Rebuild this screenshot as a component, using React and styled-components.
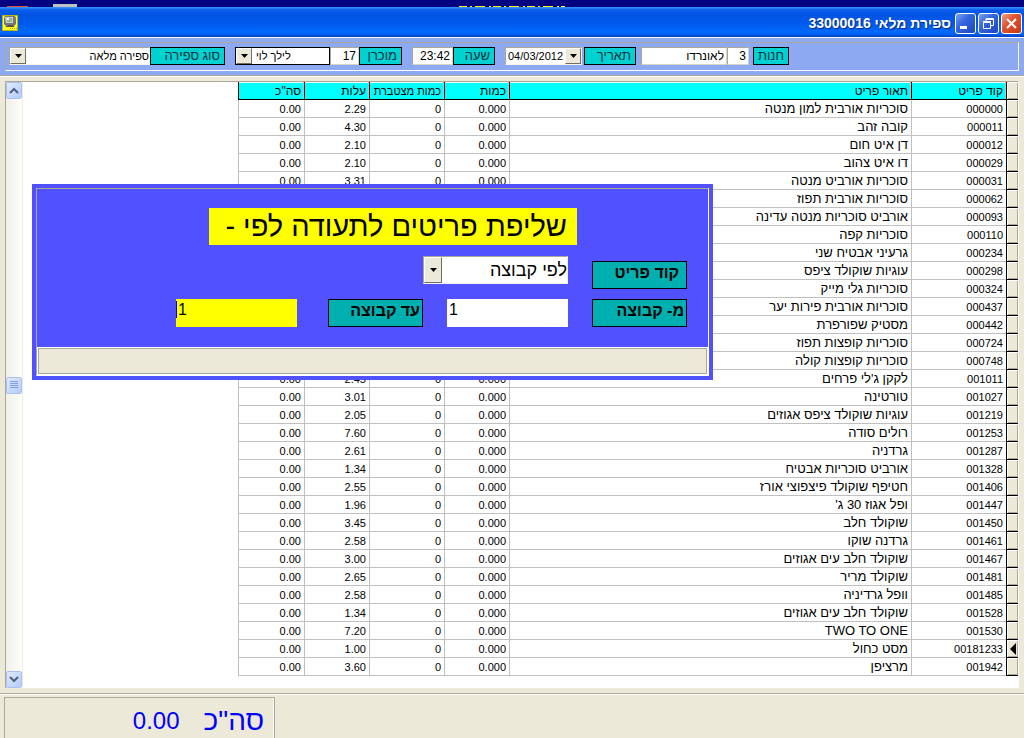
import React from 'react';
import styled, { createGlobalStyle, css } from 'styled-components';

const GlobalStyle = createGlobalStyle`
  * {
    box-sizing: border-box;
  }
  body {
    margin: 0;
    background-color: #ece9d8;
    font-family: "Liberation Sans", "DejaVu Sans", sans-serif;
    font-size: 12px;
    color: black;
  }
  input, select, button {
    font-family: inherit;
    border-radius: 0;
    margin: 0;
  }
`

const Window = styled.div`
  position: relative;
  display: flex;
  flex-direction: column;
  min-height: 100vh;
`

const Desktop = styled.div`
  display: flex;
  height: 7px;
  background-color: #000080;
  svg {
    width: 100%;
    height: 7px;
  }
`

const TitleBar = styled.header`
  display: flex;
  align-items: center;
  gap: 2px;
  height: 30px;
  padding: 2px 2px 0;
  background: linear-gradient(#3f94ff 0, #0a5de8 3px, #0054e3 8px, #0059ec 16px, #0069fd 24px, #0063f5 27px, #003cbb 30px);
`

const Title = styled.h1`
  flex: 1;
  margin: 0 2px 0 0;
  color: white;
  font-size: 14px;
  line-height: 20px;
  text-shadow: 1px 1px 1px #0a2a80;
`

const WindowButton = styled.button`
  width: 21px;
  height: 21px;
  padding: 0;
  border: 1px solid white;
  border-radius: 3px;
  background: ${props => props.$close
    ? 'linear-gradient(135deg, #f0a088, #e0532f 40%, #c63a14)'
    : 'linear-gradient(135deg, #7ba2f3, #3566de 40%, #1c46c0)'};
  svg {
    display: block;
  }
`

const Toolbar = styled.div`
  padding: 4px 5px;
  border-top: 1px solid white;
  border-bottom: 1px solid #aca899;
  background-color: #8ca9f2;
`

const ToolbarPanel = styled.div`
  display: flex;
  align-items: flex-start;
  gap: 10px;
  height: 29px;
  padding: 4px 229px 0 4px;
  border: 1px solid white;
  border-top-color: #aca899;
  border-left-color: #aca899;
`

const Group = styled.div`
  display: flex;
  flex: none;
  gap: ${props => props.$gap || 0}px;
`

const Tag = styled.label`
  width: ${props => props.$width}px;
  height: 18px;
  padding-right: 4px;
  border: 1px solid black;
  background-color: #00d2d2;
  color: #003040;
  font-size: 13px;
  line-height: 16px;
  white-space: nowrap;
`

const Field = styled.input`
  width: ${props => props.$width}px;
  height: 18px;
  padding: 0 2px;
  border: 1px solid #d8d4c4;
  border-top-color: #aca899;
  border-left-color: #aca899;
  background-color: white;
  font-size: 12px;
  text-align: right;
`

const Combo = styled.div`
  position: relative;
  width: ${props => props.$width}px;
  height: ${props => props.$large ? 28 : 18}px;
  select {
    display: block;
    width: 100%;
    height: 100%;
    padding: 0 0 0 20px;
    appearance: none;
    border: 1px solid ${props => props.$black ? 'black' : '#f4f2ea'};
    ${props => !props.$black && css`
      border-top-color: #aca899;
      border-left-color: #aca899;
    `}
    background-color: white;
    color: black;
    font-size: ${props => props.$large ? 18 : 11}px;
  }
`

const DateCombo = styled(Combo)`
  select {
    padding: 0 2px;
  }
`

const Arrow = styled.span`
  position: absolute;
  top: 1px;
  bottom: 1px;
  ${props => props.$end ? 'right: 1px;' : 'left: 1px;'}
  display: flex;
  align-items: center;
  justify-content: center;
  width: ${props => props.$large ? 18 : 16}px;
  border: 1px solid white;
  border-right-color: #716f64;
  border-bottom-color: #716f64;
  background-color: #ece9d8;
  pointer-events: none;
`

const Main = styled.main`
  padding: 4px 5px 5px;
  border-top: 1px solid white;
  border-bottom: 1px solid #aca899;
`

const Grid = styled.div`
  display: flex;
  border: 1px solid #aca899;
  border-bottom: 0;
  border-right-color: white;
  background-color: white;
`

const Table = styled.table`
  flex: 1;
  width: 0;
  margin: 0 0 12px 215px;
  border-collapse: separate;
  border-spacing: 0;
  table-layout: fixed;
`

const HeadCell = styled.th`
  width: ${props => props.$width ? props.$width + 'px' : 'auto'};
  height: 18px;
  padding: 0 3px;
  border-left: 1px solid black;
  border-bottom: 1px solid black;
  background-color: cyan;
  box-shadow: inset -1px 0 #c0c0c0, inset 0 1px #e8ffff;
  font-weight: normal;
  font-size: ${props => props.$small ? 11 : 12}px;
  line-height: 16px;
  text-align: right;
  white-space: nowrap;
`

const Cell = styled.td`
  height: 18px;
  padding: 0 3px;
  border-left: 1px solid #c0c0c0;
  border-bottom: 1px solid #c0c0c0;
  font-size: ${props => props.$text ? 13 : 11}px;
  line-height: 16px;
  text-align: right;
  white-space: nowrap;
`

const Marker = styled.td`
  width: 12px;
  height: 18px;
  padding: 0;
  border-left: 1px solid black;
  border-bottom: 1px solid black;
  background-color: #ece9d8;
  box-shadow: inset 1px 1px white, inset -1px -1px #aca899;
  svg {
    display: block;
    margin: auto;
  }
`

const ScrollBar = styled.div`
  display: flex;
  flex-direction: column;
  justify-content: space-between;
  width: 17px;
  border-right: 1px solid #eeede5;
  background: linear-gradient(90deg, #f0efe9, #fefefb);
`

const ScrollButton = styled.button`
  display: flex;
  align-items: center;
  justify-content: center;
  width: 16px;
  height: 17px;
  padding: 0;
  border: 1px solid #a8c0f4;
  border-radius: 2px;
  background: linear-gradient(135deg, #e0eaff, #b4cbfa);
`

const Footer = styled.footer`
  display: flex;
  flex: 1;
  justify-content: flex-end;
  padding: 2px 4px 0;
  border-top: 1px solid white;
`

const Total = styled.div`
  display: flex;
  align-items: center;
  gap: 24px;
  width: 271px;
  height: 42px;
  padding: 4px 10px 0;
  border: 1px solid #aca899;
  border-bottom: 0;
  box-shadow: inset -1px 0 white;
  color: blue;
  font-size: 24px;
  line-height: 32px;
`

const TotalName = styled.span`
  font-size: 28px;
`

const Dialog = styled.section`
  position: absolute;
  top: 184px;
  left: 32px;
  width: 681px;
  padding: 4px;
  background-color: #5151ff;
`

const DialogFrame = styled.form`
  display: flex;
  flex-direction: column;
  align-items: flex-start;
  border: 1px solid white;
  border-top-color: #aca899;
  border-left-color: #aca899;
`

const DialogTitle = styled.h2`
  width: 368px;
  height: 37px;
  margin: 19px 131px 11px 0;
  padding: 0 10px;
  background-color: yellow;
  font-size: 29px;
  font-weight: normal;
  line-height: 36px;
  white-space: nowrap;
`

const Criteria = styled.div`
  display: grid;
  grid-template-columns: 95px 121px 95px 128px;
  grid-template-rows: 33px 28px;
  column-gap: 24px;
  row-gap: 10px;
  align-items: end;
  padding: 0 21px 20px;
  ${Combo} {
    grid-column: 2 / 5;
    align-self: start;
  }
`

const Caption = styled.label`
  height: 28px;
  padding-right: ${props => props.$inset ? 7 : 2}px;
  border: 1px solid black;
  background-color: #00b0b0;
  font-size: 16px;
  font-weight: bold;
  line-height: 22px;
  white-space: nowrap;
`

const RangeBox = styled.div`
  position: relative;
  justify-self: end;
  width: 121px;
  input {
    display: block;
    width: 100%;
    height: 28px;
    padding: 0 2px 6px;
    border: 0;
    background-color: ${props => props.$active ? 'yellow' : 'white'};
    font-size: 16px;
    text-align: left;
  }
`

const Caret = styled.span`
  position: absolute;
  top: 2px;
  left: 0;
  width: 1px;
  height: 17px;
  background-color: blue;
`

const Status = styled.div`
  align-self: stretch;
  height: 28px;
  border: 1px solid white;
  background-color: #ece9d8;
  box-shadow: inset 1px 1px #aca899, inset -1px -1px #aca899;
`

const row = (code, name, cost) => ({ code, name, qty: '0.000', sum: '0', cost, total: '0.00' })

const items = [
  row('000000', 'סוכריות אורבית למון מנטה', '2.29'),
  row('000011', 'קובה זהב', '4.30'),
  row('000012', 'דן איט חום', '2.10'),
  row('000029', 'דו איט צהוב', '2.10'),
  row('000031', 'סוכריות אורביט מנטה', '3.31'),
  { code: '000062', name: 'סוכריות אורבית תפוז' },
  { code: '000093', name: 'אורביט סוכריות מנטה עדינה' },
  { code: '000110', name: 'סוכריות קפה' },
  { code: '000234', name: 'גרעיני אבטיח שני' },
  { code: '000298', name: 'עוגיות שוקולד ציפס' },
  { code: '000324', name: 'סוכריות גלי מייק' },
  { code: '000437', name: 'סוכריות אורבית פירות יער' },
  { code: '000442', name: 'מסטיק שפורפרת' },
  { code: '000724', name: 'סוכריות קופצות תפוז' },
  { code: '000748', name: 'סוכריות קופצות קולה' },
  row('001011', "לקקן ג'לי פרחים", '2.45'),
  row('001027', 'טורטינה', '3.01'),
  row('001219', 'עוגיות שוקולד ציפס אגוזים', '2.05'),
  row('001253', 'רולים סודה', '7.60'),
  row('001287', 'גרדניה', '2.61'),
  row('001328', 'אורביט סוכריות אבטיח', '1.34'),
  row('001406', 'חטיפף שוקולד פיצפוצי אורז', '2.55'),
  row('001447', "ופל אגוז 30 ג'", '1.96'),
  row('001450', 'שוקולד חלב', '3.45'),
  row('001461', 'גרדנה שוקו', '2.58'),
  row('001467', 'שוקולד חלב עים אגוזים', '3.00'),
  row('001481', 'שוקולד מריר', '2.65'),
  row('001485', 'וופל גרדיניה', '2.58'),
  row('001528', 'שוקולד חלב עים אגוזים', '1.34'),
  row('001530', 'TWO TO ONE', '7.20'),
  row('00181233', 'מסט כחול', '1.00'),
  row('001942', 'מרציפן', '3.60'),
]

const Triangle = () => (
  <svg width="7" height="4" viewBox="0 0 7 4"><path d="M0 0h7L3.5 4z" /></svg>
)

const Chevron = ({ up }) => (
  <svg width="10" height="7" viewBox="0 0 10 7" fill="none" stroke="#4d6185" strokeWidth="2">
    <path d={up ? 'M1 6l4-4 4 4' : 'M1 1l4 4 4-4'} />
  </svg>
)

const ComputerIcon = () => (
  <svg width="16" height="16" viewBox="0 0 16 16">
    <path fill="#ffff20" stroke="#c8b400" d="M.5.5h15v15H.5z" />
    <path fill="#777" d="M3 1h10l1 2v6l-2 2H4L2 9V3z" />
    <path fill="#c8d0d0" d="M3 2h8v6H4z" />
    <path fill="#90b890" d="M5 3h5v4H5z" />
    <path fill="#f4f4f4" d="M5 3h2v2H5z" />
    <path fill="#555" d="M6 10h5v2H6zM4 11h8v1H4z" />
    <path stroke="#a89820" strokeDasharray="1 1" d="M8 13.5h7" />
  </svg>
)

const App = () => {
  return (
    <Window dir="rtl">
      <GlobalStyle />
      <Desktop>
        <svg viewBox="0 0 1024 7" preserveAspectRatio="none">
          <path fill="#d8502c" d="M7 6h21v1H7z" />
          <path fill="#c0c0c0" d="M53 4h24v3H53z" />
          <path stroke="yellow" strokeDasharray="8 3 2 3 10 4 2 2" d="M459 6.5h106" />
        </svg>
      </Desktop>
      <TitleBar>
        <WindowButton $close aria-label="סגור">
          <svg width="19" height="19" stroke="white" strokeWidth="2"><path d="M5 5l9 9M14 5l-9 9" /></svg>
        </WindowButton>
        <WindowButton aria-label="שחזר">
          <svg width="19" height="19" fill="none" stroke="white"><path d="M7 7V4.5h7.500v7H12M7 5.500h7M4.500 8.500h7v6h-7zM4 7.500h8" /></svg>
        </WindowButton>
        <WindowButton aria-label="מזער">
          <svg width="19" height="19" fill="white"><path d="M4 12h7v3H4z" /></svg>
        </WindowButton>
        <Title>ספירת מלאי 33000016</Title>
        <ComputerIcon />
      </TitleBar>

      <Toolbar>
        <ToolbarPanel>
          <Group $gap={5}>
            <Group $gap={4}>
              <Tag $width={36} htmlFor="store">חנות</Tag>
              <Group>
                <Field $width={22} id="store" defaultValue="3" />
                <Field $width={86} aria-label="שם חנות" defaultValue="לאונרדו" />
              </Group>
            </Group>
            <Group $gap={2}>
              <Tag $width={52} htmlFor="date">תאריך</Tag>
              <DateCombo $width={77}>
                <select id="date" dir="ltr"><option>04/03/2012</option></select>
                <Arrow $end><Triangle /></Arrow>
              </DateCombo>
            </Group>
          </Group>
          <Group>
            <Tag $width={42} htmlFor="time">שעה</Tag>
            <Field $width={41} id="time" defaultValue="23:42" />
          </Group>
          <Group>
            <Tag $width={43} htmlFor="seller">מוכרן</Tag>
            <Field $width={29} id="seller" defaultValue="17" />
            <Combo $width={95} $black>
              <select aria-label="שם מוכרן" dir="ltr"><option>לילך לוי</option></select>
              <Arrow><Triangle /></Arrow>
            </Combo>
          </Group>
          <Group>
            <Tag $width={75} htmlFor="kind">סוג ספירה</Tag>
            <Combo $width={141}>
              <select id="kind"><option>ספירה מלאה</option></select>
              <Arrow><Triangle /></Arrow>
            </Combo>
          </Group>
        </ToolbarPanel>
      </Toolbar>

      <Main>
        <Grid>
          <Table>
            <thead>
              <tr>
                <Marker />
                <HeadCell $width={95}>קוד פריט</HeadCell>
                <HeadCell>תאור פריט</HeadCell>
                <HeadCell $width={65}>כמות</HeadCell>
                <HeadCell $width={75} $small>כמות מצטברת</HeadCell>
                <HeadCell $width={65}>עלות</HeadCell>
                <HeadCell $width={66}>סה"כ</HeadCell>
              </tr>
            </thead>
            <tbody>
              {items.map(item => (
                <tr key={item.code}>
                  <Marker>
                    {item.code === '00181233' && (
                      <svg width="6" height="12" viewBox="0 0 6 12"><path d="M6 0v12L0 6z" /></svg>
                    )}
                  </Marker>
                  <Cell>{item.code}</Cell>
                  <Cell $text>{item.name}</Cell>
                  <Cell>{item.qty}</Cell>
                  <Cell>{item.sum}</Cell>
                  <Cell>{item.cost}</Cell>
                  <Cell>{item.total}</Cell>
                </tr>
              ))}
            </tbody>
          </Table>
          <ScrollBar>
            <ScrollButton aria-label="למעלה"><Chevron up /></ScrollButton>
            <ScrollButton aria-label="גלילה">
              <svg width="8" height="8" stroke="#7f9fe8"><path d="M0 .5h8M0 2.500h8M0 4.500h8M0 6.500h8" /></svg>
            </ScrollButton>
            <ScrollButton aria-label="למטה"><Chevron /></ScrollButton>
          </ScrollBar>
        </Grid>
      </Main>

      <Footer>
        <Total>
          <TotalName>סה"כ</TotalName>
          <span>0.00</span>
        </Total>
      </Footer>

      <Dialog>
        <DialogFrame>
          <DialogTitle>שליפת פריטים לתעודה לפי -</DialogTitle>
          <Criteria>
            <Caption $inset htmlFor="by">קוד פריט</Caption>
            <Combo $large $width={145}>
              <select id="by"><option>לפי קבוצה</option></select>
              <Arrow $large><Triangle /></Arrow>
            </Combo>
            <Caption htmlFor="from">מ- קבוצה</Caption>
            <RangeBox>
              <input id="from" dir="ltr" defaultValue="1" />
            </RangeBox>
            <Caption htmlFor="to">עד קבוצה</Caption>
            <RangeBox $active>
              <input id="to" dir="ltr" defaultValue="1" />
              <Caret />
            </RangeBox>
          </Criteria>
          <Status />
        </DialogFrame>
      </Dialog>
    </Window>
  );
}

export default App;
